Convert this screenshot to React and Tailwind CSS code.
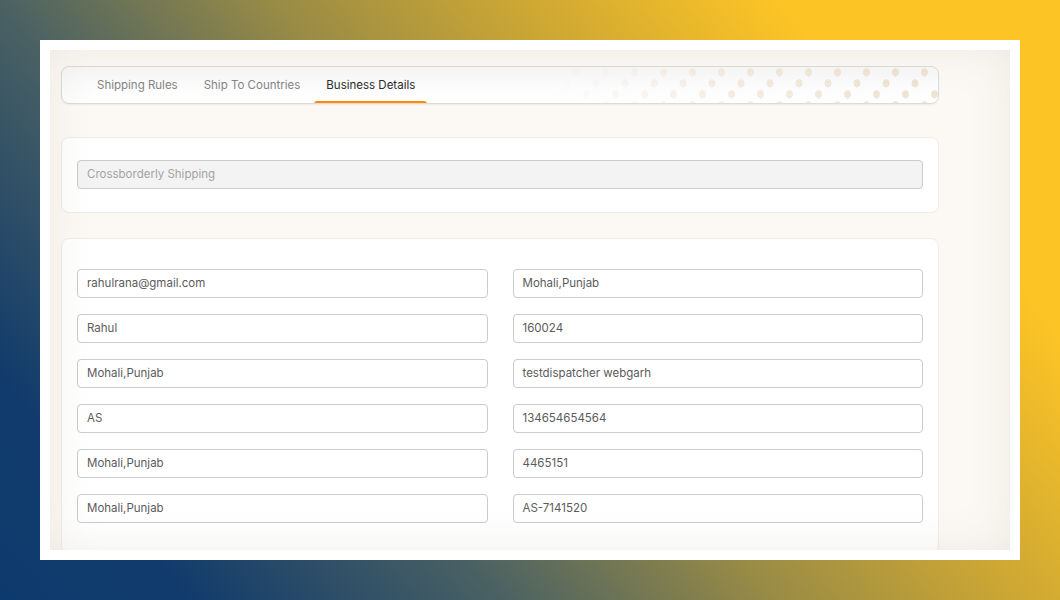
import React from 'react';

const TABS = ['Shipping Rules', 'Ship To Countries', 'Business Details'];

const FIELDS = [
  ['rahulrana@gmail.com', 'Mohali,Punjab'],
  ['Rahul', '160024'],
  ['Mohali,Punjab', 'testdispatcher webgarh'],
  ['AS', '134654654564'],
  ['Mohali,Punjab', '4465151'],
  ['Mohali,Punjab', 'AS-7141520'],
];

const Balloons = () => (
  <svg
    className="absolute inset-0 h-full w-full"
    style={{
      WebkitMaskImage: 'linear-gradient(to right, transparent 56%, rgba(0,0,0,0.7) 78%, black 95%)',
      maskImage: 'linear-gradient(to right, transparent 56%, rgba(0,0,0,0.7) 78%, black 95%)',
    }}
  >
    <defs>
      <symbol id="bl" viewBox="0 0 10 12">
        <ellipse cx="5" cy="4.6" rx="3.5" ry="4.1" fill="#f2e4d2" stroke="#e4e0da" strokeWidth="0.7" />
        <path d="M5 8.7 L4.3 10.2 L5.7 10.2 Z" fill="#e9ded0" />
        <path d="M4.1 3.6 Q5 2.6 5.9 3.6" stroke="#e9cfa8" strokeWidth="0.7" fill="none" />
      </symbol>
      <pattern id="bp" x="3" y="1" width="29" height="33" patternUnits="userSpaceOnUse">
        <use href="#bl" x="14" y="0" width="9" height="11" />
        <use href="#bl" x="4.5" y="11" width="9" height="11" />
        <use href="#bl" x="24" y="22" width="9" height="11" />
        <use href="#bl" x="-5" y="22" width="9" height="11" />
      </pattern>
    </defs>
    <rect width="100%" height="100%" fill="url(#bp)" />
  </svg>
);

const Field = ({ value, disabled }) => (
  <div
    className={`h-[29px] flex items-center px-[9px] pt-[1px] rounded-[4px] border border-[#cbcbcb] text-[11.5px] ${
      disabled ? 'bg-[#f3f3f3] text-[#a3a3a3]' : 'bg-white text-[#5b5b5b]'
    }`}
  >
    {value}
  </div>
);

export default function App() {
  return (
    <div
      className="w-[1060px] h-[600px] p-[40px]"
      style={{ fontFamily: 'Inter, "Noto Sans", sans-serif' }}
    >
      <div className="absolute inset-0 -z-10 w-[1060px] h-[600px] bg-[linear-gradient(50deg,#0d3a6e_0%,#113b6c_12%,#4a6163_32%,#9a8c45_50%,#c9a535_64%,#fdc425_82%,#fdc425_100%)]" />
      <div className="bg-white p-[10px] h-[520px]">
        <div className="relative h-[500px] overflow-hidden bg-[#fcf9f4]">
          <div className="pl-[11px] pt-[16px] w-[889px]">
            {/* Tabs */}
            <div className="relative h-[38px] rounded-[8px] border border-[#dcdcdc] bg-[linear-gradient(to_bottom,#f8f8f8,#ffffff)] shadow-[0_1px_2px_rgba(0,0,0,0.06)] overflow-hidden">
              <Balloons />
              <div className="relative flex h-full gap-[2px] pl-[23px]">
                {TABS.map((t, i) => (
                  <div
                    key={t}
                    className={`relative flex items-center px-[12px] pt-[2px] text-[11.5px] ${
                      i === 2 ? 'text-[#2b2b2b]' : 'text-[#858585]'
                    }`}
                  >
                    {t}
                    {i === 2 && (
                      <span className="absolute left-0 right-0 bottom-[-1px] h-[3px] rounded-t-[3px] bg-[#ff8a00]" />
                    )}
                  </div>
                ))}
              </div>
            </div>

            {/* Company */}
            <div className="mt-[33px] rounded-[8px] border border-[#f0ece6] bg-white px-[15px] pt-[22px] pb-[23px]">
              <Field value="Crossborderly Shipping" disabled />
            </div>

            {/* Details */}
            <div className="mt-[25px] rounded-[8px] border border-[#f0ece6] bg-white px-[15px] pt-[30px] pb-[30px]">
              <div className="grid grid-cols-2 gap-x-[25px] gap-y-[16px]">
                {FIELDS.map(([a, b], i) => (
                  <React.Fragment key={i}>
                    <Field value={a} />
                    <Field value={b} />
                  </React.Fragment>
                ))}
              </div>
            </div>
          </div>
          {/* vignette over the captured screen */}
          <div className="pointer-events-none absolute inset-0 shadow-[inset_0_0_45px_rgba(90,70,40,0.09)]" />
        </div>
      </div>
    </div>
  );
}
